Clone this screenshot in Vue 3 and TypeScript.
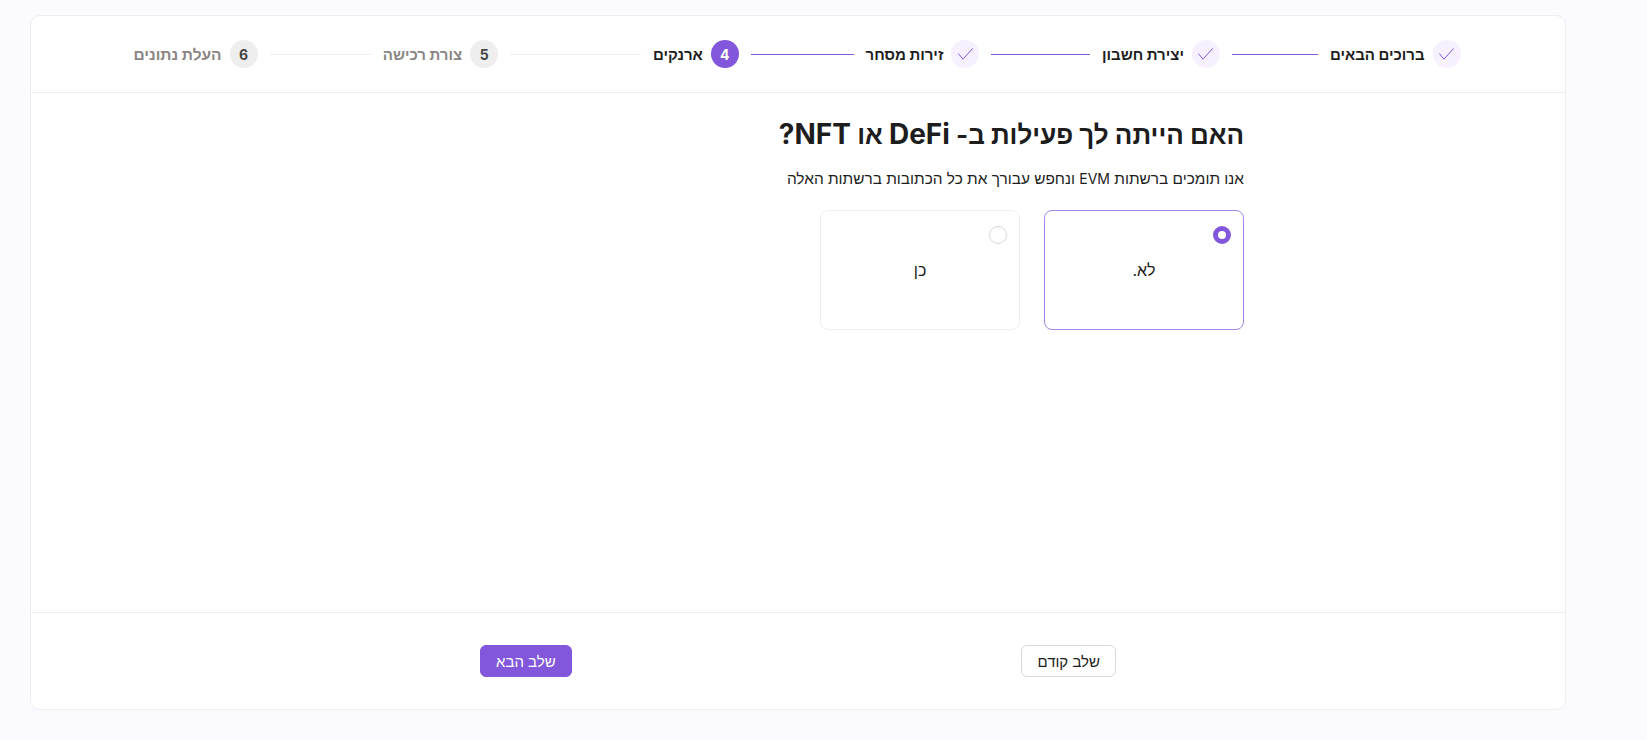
<template>
  <div class="page" dir="rtl">
    <div class="panel">
      <header class="stepper">
        <div
          v-for="(step, i) in STEPS"
          :key="step.label"
          :class="['step', step.state, { last: i === STEPS.length - 1 }]"
        >
          <span class="step-circle">
            <svg v-if="step.state === 'done'" width="15" height="12" viewBox="0 0 15 12" fill="none" stroke="currentColor" stroke-width="1" stroke-linecap="round" stroke-linejoin="round">
              <path d="M.6 5.8 5 11.2 14.4.7" />
            </svg>
            <template v-else>{{ i + 1 }}</template>
          </span>
          <span class="step-label">{{ step.label }}</span>
          <span v-if="i < STEPS.length - 1" class="step-line" />
        </div>
      </header>

      <main class="content">
        <h1 class="title">האם הייתה לך פעילות ב- <span class="latin">DeFi</span> או <span class="latin">NFT?</span></h1>
        <p class="subtitle">אנו תומכים ברשתות <span class="latin">EVM</span> ונחפש עבורך את כל הכתובות ברשתות האלה</p>
        <div class="options">
          <label
            v-for="opt in OPTIONS"
            :key="opt"
            :class="['option', { selected: selected === opt }]"
            @click="selected = opt"
          >
            <span class="radio" />
            <span class="option-text">{{ opt }}</span>
          </label>
        </div>
      </main>

      <footer class="actions">
        <button class="btn btn-back" type="button">שלב קודם</button>
        <button class="btn btn-next" type="button">שלב הבא</button>
      </footer>
    </div>
  </div>
</template>

<script setup lang="ts">
import { ref } from 'vue'

const STEPS = [
  { label: 'ברוכים הבאים', state: 'done' },
  { label: 'יצירת חשבון', state: 'done' },
  { label: 'זירות מסחר', state: 'done' },
  { label: 'ארנקים', state: 'active' },
  { label: 'צורת רכישה', state: 'todo' },
  { label: 'העלת נתונים', state: 'todo' },
]

const OPTIONS = ['לא.', 'כן']
const selected = ref('לא.')
</script>

<style>
html, body { margin: 0; background: #fbfaff; }
</style>

<style scoped>
* { box-sizing: border-box; }

.page {
  height: 740px;
  padding: 15px 81px 30px 30px;
  overflow: hidden;
  font-family: Inter, "Liberation Sans", sans-serif;
  color: #1d1d1d;
}
.panel {
  height: 695px;
  display: flex;
  flex-direction: column;
  background: #fff;
  border: 1px solid #eeeeee;
  border-radius: 10px;
}

/* Stepper */
.stepper {
  height: 77px;
  flex-shrink: 0;
  display: flex;
  align-items: center;
  justify-content: center;
  gap: 12px;
  padding-right: 2px;
  border-bottom: 1px solid #eeeeee;
}
.step {
  width: 228.6px;
  display: flex;
  align-items: center;
  gap: 8px;
}
.step.last { width: auto; }
.step-circle {
  width: 28px;
  height: 28px;
  flex-shrink: 0;
  display: flex;
  align-items: center;
  justify-content: center;
  border-radius: 50%;
  font-size: 14px;
  font-weight: 700;
}
.step-label {
  font-size: 15px;
  font-weight: 700;
  white-space: nowrap;
}
.last .step-label { font-size: 15.5px; }
.step-line {
  flex: 1;
  height: 1px;
  margin-right: 4px;
  background: #eeeeee;
}
.done .step-circle { background: #f6f0ff; color: #8257dc; }
.done .step-line { background: #8257dc; }
.active .step-circle { background: #8257dc; color: #fff; }
.todo .step-circle { background: #eeeeee; color: #444; }
.todo .step-label { color: #8a8583; }

/* Question */
.content {
  flex: 1;
  width: 892px;
  margin: 0 auto;
  padding-top: 23px;
}
.title {
  margin: 0;
  font-size: 26px;
  line-height: 36px;
  font-weight: 700;
}
.title .latin { font-size: 28px; }
.subtitle {
  margin: 15px 0 0;
  font-size: 15.4px;
  line-height: 22px;
}
.subtitle .latin { font-size: 14px; }
.options {
  margin-top: 20px;
  display: flex;
  gap: 24px;
}
.option {
  position: relative;
  width: 200px;
  height: 120px;
  display: flex;
  align-items: center;
  justify-content: center;
  border: 1px solid #eeeeee;
  border-radius: 8px;
  font-size: 16px;
  cursor: pointer;
}
.option.selected { border-color: #a585e6; }
.radio {
  position: absolute;
  top: 15px;
  right: 12px;
  width: 18px;
  height: 18px;
  border: 1px solid #d6d6d6;
  border-radius: 50%;
}
.selected .radio { border: 5px solid #8257dc; }

/* Footer */
.actions {
  height: 97px;
  flex-shrink: 0;
  display: flex;
  align-items: center;
  justify-content: space-between;
  padding: 0 449px 0 449px;
  border-top: 1px solid #eeeeee;
}
.btn {
  height: 32px;
  padding: 0 15px;
  border-radius: 6px;
  font-family: inherit;
  font-size: 15px;
  cursor: pointer;
}
.btn-back { border: 1px solid #d9d9d9; background: #fff; color: #1d1d1d; }
.btn-next { border: 1px solid #8257dc; background: #8257dc; color: #fff; }
</style>
